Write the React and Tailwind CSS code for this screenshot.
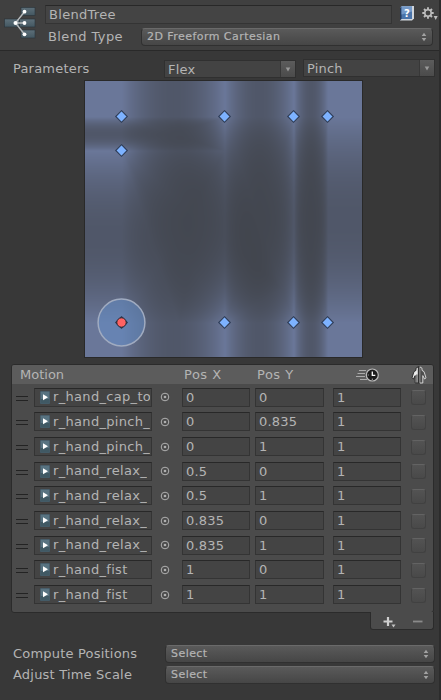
import { useEffect, useRef } from "react";

const MOTIONS = [
  ["r_hand_cap_to", 0, 0],
  ["r_hand_pinch_", 0, 0.835],
  ["r_hand_pinch_", 0, 1],
  ["r_hand_relax_", 0.5, 0],
  ["r_hand_relax_", 0.5, 1],
  ["r_hand_relax_", 0.835, 0],
  ["r_hand_relax_", 0.835, 1],
  ["r_hand_fist", 1, 0],
  ["r_hand_fist", 1, 1],
];

const W = 277;
const H = 276;
const ORIGIN_X = 36.5;
const ORIGIN_Y = 241.5;
const UNIT = 206;

const toX = (x) => ORIGIN_X + x * UNIT;
const toY = (y) => ORIGIN_Y - y * UNIT;

// Gradient band interpolation: sum of squared weights at a point.
function influence(px, py) {
  let total = 0;
  let squares = 0;
  for (const [, xi, yi] of MOTIONS) {
    let w = 1;
    for (const [, xj, yj] of MOTIONS) {
      const dx = xj - xi;
      const dy = yj - yi;
      const len = dx * dx + dy * dy;
      if (len === 0) continue;
      w = Math.min(w, 1 - ((px - xi) * dx + (py - yi) * dy) / len);
    }
    w = Math.max(0, w);
    total += w;
    squares += w * w;
  }
  return total > 0 ? squares / (total * total) : 0;
}

function BlendField() {
  const ref = useRef(null);
  useEffect(() => {
    const ctx = ref.current.getContext("2d");
    const img = ctx.createImageData(W, H);
    for (let y = 0; y < H; y++) {
      for (let x = 0; x < W; x++) {
        const v = influence((x - ORIGIN_X) / UNIT, (ORIGIN_Y - y) / UNIT);
        const k = (y * W + x) * 4;
        img.data[k] = 54 + 52 * v;
        img.data[k + 1] = 55 + 64 * v;
        img.data[k + 2] = 56 + 97 * v;
        img.data[k + 3] = 255;
      }
    }
    ctx.putImageData(img, 0, 0);
  }, []);
  return (
    <div className="relative ml-[85px] mt-[4px] h-[276px] w-[277px] shrink-0 outline outline-[#292929]">
      <canvas ref={ref} width={W} height={H} className="block" />
      <svg className="absolute inset-0" width={W} height={H}>
        <circle cx={toX(0)} cy={toY(0)} r="23.4" fill="#6390cc" fillOpacity="0.5" stroke="#a0abc0" strokeWidth="1.5" />
        {MOTIONS.map(([, x, y], i) => (
          <path
            key={i}
            d={`M${toX(x)} ${toY(y) - 5.8}l5.8 5.8l-5.8 5.8l-5.8 -5.8z`}
            fill={i === 0 ? "#25303f" : "#7db2ff"}
            stroke="#2f3c55"
            strokeWidth="1.1"
          />
        ))}
        <circle cx={toX(0)} cy={toY(0)} r="4.7" fill="#ff6262" stroke="#252b38" strokeWidth="1" />
      </svg>
    </div>
  );
}

function UpDown() {
  return (
    <svg className="shrink-0" width="6" height="10" viewBox="0 0 6 10" fill="#a2a2a2">
      <path d="M3 0.7L5.3 4H0.7zM3 9.3L5.3 6H0.7z" />
    </svg>
  );
}

function Popup({ className, children }) {
  return (
    <div
      className={`flex items-center justify-between rounded-[4px] border border-[#303030] border-t-[#6a6a6a] bg-gradient-to-b from-[#5a5a5a] to-[#464646] pl-[5px] pr-[5px] text-[11px] tracking-[0.45px] [-webkit-text-stroke:0.2px_#b4b4b4] ${className}`}
    >
      <span>{children}</span>
      <UpDown />
    </div>
  );
}

function Combo({ children, className }) {
  return (
    <div className={`flex h-[18px] w-[132px] border border-[#303030] bg-[#434343] ${className}`}>
      <span className="flex-1 pl-[3px] leading-[17px]">{children}</span>
      <span className="flex w-[15px] items-center justify-center border-l border-[#383838] bg-gradient-to-b from-[#5c5c5c] to-[#4b4b4b]">
        <svg width="6" height="5" viewBox="0 0 6 5" fill="#999">
          <path d="M0.7 0.5H5.3L3 4.5z" />
        </svg>
      </span>
    </div>
  );
}

function Field({ children, className }) {
  return (
    <div
      className={`shrink-0 overflow-hidden whitespace-nowrap border border-[#343434] border-t-[#282828] bg-[#444] ${className}`}
    >
      {children}
    </div>
  );
}

function MotionRow({ name, x, y }) {
  return (
    <div className="flex h-[24.67px] items-center">
      <div className="ml-[4px] mt-[2px] h-[5px] w-[12px] shrink-0 border-y border-[#232323]" />
      <Field className="ml-[6px] flex h-[19px] w-[118px] items-center pl-[5px] pr-[1px] leading-[18px]">
        <svg className="mr-[3px] shrink-0" width="10" height="13" viewBox="0 0 10 13">
          <rect width="10" height="13" fill="#3b4b54" />
          <rect x="0.5" y="0.5" width="9" height="12" fill="#587381" />
          <rect x="0.5" y="8" width="9" height="4.5" fill="#405964" />
          <path d="M3 3.2L8 6.3L3 9.3z" fill="#fff" />
        </svg>
        <span className="overflow-hidden tracking-[0.32px]">{name}</span>
      </Field>
      <svg className="ml-[8px] shrink-0" width="10" height="10" viewBox="0 0 10 10">
        <circle cx="5" cy="5" r="3.8" fill="none" stroke="#b0b0b0" strokeWidth="1" />
        <circle cx="5" cy="5" r="1.3" fill="#b0b0b0" />
      </svg>
      <Field className="ml-[12px] h-[19px] w-[68px] pl-[3px] leading-[18px]">{x}</Field>
      <Field className="ml-[5px] h-[19px] w-[69px] pl-[3px] leading-[18px]">{y}</Field>
      <Field className="ml-[9px] h-[19px] w-[68px] pl-[3px] leading-[18px]">1</Field>
      <div className="ml-[10px] mt-[1px] h-[15px] w-[15px] shrink-0 rounded-[3px] border border-[#414141] border-t-[#636363] bg-gradient-to-b from-[#535353] to-[#494949]" />
    </div>
  );
}

function TreeIcon() {
  return (
    <svg className="shrink-0" width="32" height="34" viewBox="0 0 32 34">
      <defs>
        <linearGradient id="bar" x1="0" y1="0" x2="0" y2="1">
          <stop offset="0" stopColor="#5d6f79" />
          <stop offset="1" stopColor="#435761" />
        </linearGradient>
      </defs>
      <g fill="url(#bar)" stroke="#29333a" strokeWidth="0.6">
        <rect x="17" y="2.5" width="14" height="8" />
        <rect x="0.5" y="14" width="15" height="8" />
        <rect x="15.5" y="14" width="15.5" height="8" />
        <rect x="17" y="25" width="14" height="8" />
      </g>
      <path d="M20.5 6.7L11.5 18L20.5 29.3M11.5 18H20.5" fill="none" stroke="#b6babc" strokeWidth="1.4" />
      <g fill="#fff">
        <circle cx="20.5" cy="6.7" r="1.9" />
        <circle cx="11.5" cy="18" r="2" />
        <circle cx="20.5" cy="18" r="1.9" />
        <circle cx="20.5" cy="29.3" r="1.9" />
      </g>
    </svg>
  );
}

function HelpIcon() {
  return (
    <svg className="ml-[7px] shrink-0" width="16" height="17" viewBox="0 0 16 16">
      <path d="M1 2L3 0.5H15V13L13 15H1z" fill="#d0d5db" />
      <path d="M1 2L3 1V13L1 15z" fill="#253b5b" />
      <rect x="2.5" y="1" width="10.5" height="12.5" fill="#4a74aa" />
      <path d="M2.5 1H13V6L2.5 9z" fill="#7499c8" />
      <text x="8" y="11" textAnchor="middle" fontSize="10" fontWeight="bold" fill="#fff" fontFamily="DejaVu Sans">?</text>
    </svg>
  );
}

function GearIcon() {
  return (
    <svg className="ml-[7px] mt-[2px] shrink-0" width="17" height="14" viewBox="0 0 17 14">
      <g stroke="#bdbdbd" strokeWidth="1.9">
        <path d="M6 0.3V3M6 9V11.7M0.3 6H3M9 6H11.7M2 2L4 4M8 8L10 10M2 10L4 8M8 4L10 2" />
      </g>
      <circle cx="6" cy="6" r="3.2" fill="none" stroke="#bdbdbd" strokeWidth="1.5" />
      <path d="M11.7 9H15.7L13.7 13z" fill="#bdbdbd" />
    </svg>
  );
}

function SpeedIcon() {
  return (
    <svg className="shrink-0" width="25" height="14" viewBox="0 0 25 14">
      <path d="M4 2.5H11M2.5 5.5H10M1 8.5H10M5 11.5H12" stroke="#aaa" strokeWidth="1.1" />
      <circle cx="17.3" cy="7" r="6" fill="#1c1c1c" stroke="#bcbcbc" strokeWidth="1.2" />
      <path d="M17.3 3.4V7.3H20.3" fill="none" stroke="#fff" strokeWidth="1.3" />
      <path d="M17.3 10.6V12M12.7 7H13.8" stroke="#aaa" strokeWidth="1" />
    </svg>
  );
}

function MirrorIcon() {
  return (
    <svg className="shrink-0" width="16" height="18" viewBox="0 0 16 18">
      <path d="M7.3 0.8L5 2.2V4.4L3 5.6L1 11.8L2.4 13L4.2 9.6V17H7.3z" fill="#ececec" stroke="#222" strokeWidth="0.9" />
      <path d="M8.7 0.8L11 2.2V4.4L13 5.6L15 11.8L13.6 13L11.8 9.6V17H8.7z" fill="#4d4d4d" stroke="#e0e0e0" strokeWidth="0.9" />
      <path d="M8 0V18M5.9 8.5V17" stroke="#222" strokeWidth="0.9" />
    </svg>
  );
}

export default function App() {
  return (
    <div className="flex h-[700px] w-[441px] flex-col overflow-hidden border-r-2 border-[#2c2c2c] bg-[#383838] font-['DejaVu_Sans',sans-serif] text-[13px] tracking-[0.2px] text-[#b4b4b4]">
      <header className="flex h-[51px] shrink-0 border-b border-[#292929] bg-[#404040] pl-[4px] pt-[5px]">
        <TreeIcon />
        <div className="ml-[9px] flex shrink-0 flex-col">
          <div className="flex">
            <Field className="h-[19px] w-[347px] pl-[3px] leading-[18px] tracking-[0.3px]">BlendTree</Field>
            <HelpIcon />
            <GearIcon />
          </div>
          <div className="mt-[4px] flex h-[18px] items-center">
            <span className="w-[96px] whitespace-nowrap pl-[3px] tracking-[0.4px]">Blend Type</span>
            <Popup className="h-[18px] w-[292px]">2D Freeform Cartesian</Popup>
          </div>
        </div>
      </header>

      <div className="flex h-[26px] shrink-0 items-start pl-[13px] pt-[8px]">
        <span className="w-[151px] leading-[20px]">Parameters</span>
        <Combo className="mt-px">Flex</Combo>
        <Combo className="ml-[7px]">Pinch</Combo>
      </div>

      <BlendField />

      <section className="ml-[11px] mt-[7px] h-[249px] w-[423px] shrink-0 rounded-[3px] border border-[#2b2b2b] bg-[#4b4b4b]">
        <div className="flex h-[19px] items-center rounded-t-[2px] bg-[#5c5c5c] pl-[8px]">
          <span className="w-[164px] tracking-[0px]">Motion</span>
          <span className="w-[73px] tracking-[0.5px]">Pos X</span>
          <span className="w-[98px] tracking-[0.5px]">Pos Y</span>
          <SpeedIcon />
          <div className="ml-[31px] mt-px shrink-0">
            <MirrorIcon />
          </div>
        </div>
        <div className="mt-[1px] flex flex-col">
          {MOTIONS.map(([name, x, y], i) => (
            <MotionRow key={i} name={name} x={x} y={y} />
          ))}
        </div>
      </section>
      <div className="-mt-px ml-[370px] flex h-[18px] w-[64px] shrink-0 items-center rounded-b-[3px] border border-t-0 border-[#2b2b2b] bg-[#4b4b4b] pl-[11px] pt-[2px]">
        <svg width="42" height="12" viewBox="0 0 42 12">
          <path d="M6 1V10M1.5 5.5H10.5" stroke="#cfcfcf" strokeWidth="2.2" />
          <path d="M9.5 8.5H13.5L11.5 11.5z" fill="#c4c4c4" />
          <path d="M31 5.5H40.5" stroke="#8a8a8a" strokeWidth="1.8" />
        </svg>
      </div>

      <div className="mt-[15px] flex flex-col gap-[3px] pl-[13px]">
        <div className="flex h-[18px] items-center">
          <span className="w-[152px] whitespace-nowrap">Compute Positions</span>
          <Popup className="h-[18px] w-[270px]">Select</Popup>
        </div>
        <div className="flex h-[18px] items-center">
          <span className="w-[152px] whitespace-nowrap">Adjust Time Scale</span>
          <Popup className="h-[18px] w-[270px]">Select</Popup>
        </div>
      </div>
    </div>
  );
}
